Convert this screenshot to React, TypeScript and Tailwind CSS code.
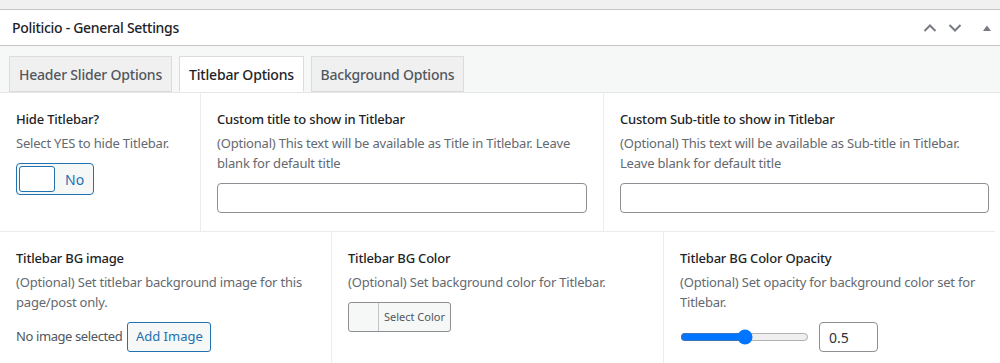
import React from "react";

const font = { fontFamily: '"Noto Sans", "Open Sans", sans-serif' };

function HeaderIcons() {
  return (
    <div className="flex items-center">
      <svg width="14" height="10" viewBox="0 0 14 10" className="mr-[11px]">
        <path d="M1.5 8 L7 2.5 L12.5 8" fill="none" stroke="#787c82" strokeWidth="2" />
      </svg>
      <svg width="14" height="10" viewBox="0 0 14 10" className="mr-[20px]">
        <path d="M1.5 2 L7 7.5 L12.5 2" fill="none" stroke="#787c82" strokeWidth="2" />
      </svg>
      <svg width="10" height="8" viewBox="0 0 10 8" className="mr-[8px]">
        <path d="M1 7 L5 1.5 L9 7 Z" fill="#787c82" />
      </svg>
    </div>
  );
}

function Tab({ label, active, width }: { label: string; active?: boolean; width: string }) {
  return (
    <div
      className={
        "flex h-[36px] items-center justify-center border border-[#dcdcde] text-[14px] font-medium tracking-[-0.2px] " +
        width +
        (active ? " -mb-px border-b-white bg-white text-[#1d2327]" : " bg-[#f0f0f1] text-[#50575e]")
      }
    >
      {label}
    </div>
  );
}

function Label({ children }: { children: React.ReactNode }) {
  return <div className="text-[13px] font-medium leading-[20px] tracking-[-0.2px] text-[#1d2327]">{children}</div>;
}

function Desc({ children }: { children: React.ReactNode }) {
  return <div className="mt-1 text-[13px] leading-[20px] tracking-[-0.2px] text-[#646970]">{children}</div>;
}

export default function App() {
  return (
    <div className="h-[363px] w-[1000px] overflow-hidden bg-[#f0f0f1]" style={font}>
      <div className="mt-[9px] border-t border-[#c3c4c7] bg-white">
        <div className="flex h-[36px] items-center justify-between border-b border-[#c3c4c7] pl-3">
          <h2 className="text-[14px] font-medium tracking-[-0.3px] text-[#1d2327]">Politicio - General Settings</h2>
          <HeaderIcons />
        </div>
        <div className="flex gap-[7px] border-b border-[#e6e6e6] bg-[#f6f7f7] pl-[9px] pt-[10px]">
          <Tab label="Header Slider Options" width="w-[163px]" />
          <Tab label="Titlebar Options" active width="w-[125px]" />
          <Tab label="Background Options" width="w-[153px]" />
        </div>
        <div className="w-[995px]">
          <div className="flex h-[139px] border-b border-[#ececec]">
            <div className="w-[201px] shrink-0 border-r border-[#ececec] px-4 pt-4">
              <Label>Hide Titlebar?</Label>
              <Desc>Select YES to hide Titlebar.</Desc>
              <div className="mt-[10px] flex h-[32px] w-[78px] items-center rounded-[4px] border border-[#2271b1] bg-[#f6f7f7] p-[2px]">
                <div className="h-[26px] w-[36px] rounded-[3px] border border-[#2271b1] bg-white" />
                <span className="ml-[10px] text-[14px] text-[#2271b1]">No</span>
              </div>
            </div>
            <div className="w-[403px] shrink-0 border-r border-[#ececec] px-4 pt-4">
              <Label>Custom title to show in Titlebar</Label>
              <Desc>(Optional) This text will be available as Title in Titlebar. Leave blank for default title</Desc>
              <input className="mt-[10px] h-[30px] w-[370px] rounded-[4px] border border-[#8c8f94] bg-white" />
            </div>
            <div className="min-w-0 flex-1 px-4 pt-4">
              <Label>Custom Sub-title to show in Titlebar</Label>
              <Desc>(Optional) This text will be available as Sub-title in Titlebar. Leave blank for default title</Desc>
              <input className="mt-[10px] h-[30px] w-[369px] rounded-[4px] border border-[#8c8f94] bg-white" />
            </div>
          </div>
          <div className="flex h-[131px]">
            <div className="w-[332px] shrink-0 border-r border-[#ececec] px-4 pt-4">
              <Label>Titlebar BG image</Label>
              <Desc>(Optional) Set titlebar background image for this page/post only.</Desc>
              <div className="mt-[10px] flex items-center">
                <span className="text-[13px] tracking-[-0.4px] text-[#50575e]">No image selected</span>
                <button className="ml-[5px] h-[30px] w-[84px] rounded-[3px] border border-[#2271b1] bg-[#f6f7f7] text-[13px] text-[#2271b1]">
                  Add Image
                </button>
              </div>
            </div>
            <div className="w-[332px] shrink-0 border-r border-[#ececec] px-4 pt-4">
              <Label>Titlebar BG Color</Label>
              <Desc>(Optional) Set background color for Titlebar.</Desc>
              <div className="mt-[10px] flex h-[30px] w-[103px] overflow-hidden rounded-[3px] border border-[#8c8f94] bg-[#f6f7f7]">
                <div className="w-[30px] border-r border-[#c3c4c7]" />
                <span className="flex flex-1 items-center justify-center text-[11px] text-[#50575e]">Select Color</span>
              </div>
            </div>
            <div className="min-w-0 flex-1 px-4 pt-4">
              <Label>Titlebar BG Color Opacity</Label>
              <Desc>(Optional) Set opacity for background color set for Titlebar.</Desc>
              <div className="mt-[10px] flex items-center">
                <input type="range" min={0} max={1} step={0.1} defaultValue={0.5} className="w-[129px]" />
                <input
                  type="text"
                  defaultValue="0.5"
                  className="ml-[10px] h-[30px] w-[59px] rounded-[4px] border border-[#8c8f94] bg-white px-[9px] text-[14px] text-[#2c3338]"
                />
              </div>
            </div>
          </div>
        </div>
      </div>
    </div>
  );
}
